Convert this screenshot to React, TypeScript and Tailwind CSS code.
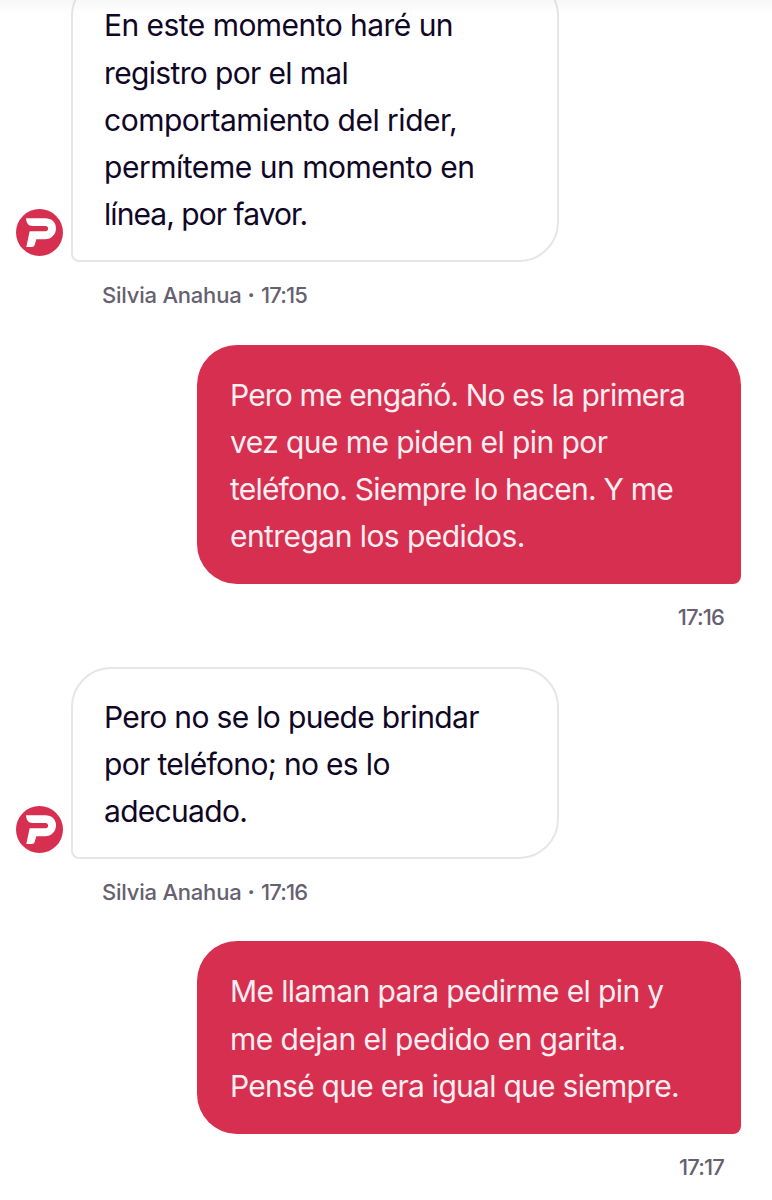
import React from "react";

type Line = { text: string; tracking: string };

type Message = {
  from: "agent" | "me";
  author?: string;
  time: string;
  lines: Line[];
};

const messages: Message[] = [
  {
    from: "agent",
    author: "Silvia Anahua",
    time: "17:15",
    lines: [
      { text: "En este momento haré un", tracking: "tracking-[-0.54px]" },
      { text: "registro por el mal", tracking: "tracking-[-0.65px]" },
      { text: "comportamiento del rider,", tracking: "tracking-[-0.5px]" },
      { text: "permíteme un momento en", tracking: "tracking-[-0.47px]" },
      { text: "línea, por favor.", tracking: "tracking-[-0.95px]" },
    ],
  },
  {
    from: "me",
    time: "17:16",
    lines: [
      { text: "Pero me engañó. No es la primera", tracking: "tracking-[-0.84px]" },
      { text: "vez que me piden el pin por", tracking: "tracking-[-0.57px]" },
      { text: "teléfono. Siempre lo hacen. Y me", tracking: "tracking-[-0.8px]" },
      { text: "entregan los pedidos.", tracking: "tracking-[-0.56px]" },
    ],
  },
  {
    from: "agent",
    author: "Silvia Anahua",
    time: "17:16",
    lines: [
      { text: "Pero no se lo puede brindar", tracking: "tracking-[-0.67px]" },
      { text: "por teléfono; no es lo", tracking: "tracking-[-0.67px]" },
      { text: "adecuado.", tracking: "tracking-[-0.7px]" },
    ],
  },
  {
    from: "me",
    time: "17:17",
    lines: [
      { text: "Me llaman para pedirme el pin y", tracking: "tracking-[-0.63px]" },
      { text: "me dejan el pedido en garita.", tracking: "tracking-[-0.54px]" },
      { text: "Pensé que era igual que siempre.", tracking: "tracking-[-0.73px]" },
    ],
  },
];

function Avatar() {
  return (
    <svg viewBox="0 0 141 141" className="mb-[6px] ml-4 h-[47px] w-[47px] shrink-0">
      <circle cx="70.5" cy="70.5" r="70.5" fill="#d72f50" />
      <path
        fill="#fff"
        d="M30 28H88C107 28 120 40 120 58C120 77 106 91 87 91H61L56 108Q54 114 48 114H31L41 67H88C99 67 99 51 88 51H50C38 51 31 44 30 28Z"
      />
    </svg>
  );
}

function Lines({ lines }: { lines: Line[] }) {
  return (
    <>
      {lines.map((line) => (
        <p key={line.text} className="whitespace-nowrap">
          <span className={line.tracking}>{line.text}</span>
        </p>
      ))}
    </>
  );
}

function AgentMessage({ message }: { message: Message }) {
  return (
    <div>
      <div className="flex items-end">
        <Avatar />
        <div className="ml-2 w-[488px] rounded-[40px] rounded-bl-[8px] border-2 border-[#e6e6e8] pr-8 pl-[31px] pt-[24.4px] pb-[21.6px] text-[30px] leading-[47.2px] text-[#100626]">
          <Lines lines={message.lines} />
        </div>
      </div>
      <div className="ml-[102px] flex h-[82.5px] pt-[17px] text-[22px] leading-8 font-medium text-[#666070]">
        <span className="tracking-[-0.22px]">{message.author}</span>
        <span className="w-[19.5px] text-center font-bold">·</span>
        <span className="tracking-[-0.85px]">{message.time}</span>
      </div>
    </div>
  );
}

function MyMessage({ message }: { message: Message }) {
  return (
    <div className="mr-[31px] flex flex-col items-end">
      <div className="w-[544px] rounded-[40px] rounded-br-[8px] bg-[#d72f50] px-[33px] pt-[27px] pb-6 text-[30px] leading-[47.2px] text-[#fdeef1]">
        <Lines lines={message.lines} />
      </div>
      <div className="mr-[17px] flex h-[83px] pt-[17px] text-[22px] leading-8 font-medium text-[#666070]">
        <span className="tracking-[-0.85px]">{message.time}</span>
      </div>
    </div>
  );
}

export default function App() {
  return (
    <main className="relative h-[1200px] w-[772px] overflow-hidden bg-white font-['Inter',sans-serif]">
      <div className="-mt-6">
        {messages.map((message, i) =>
          message.from === "agent" ? (
            <AgentMessage key={i} message={message} />
          ) : (
            <MyMessage key={i} message={message} />
          )
        )}
      </div>
      {/* header shadow */}
      <div className="absolute inset-x-0 top-0 h-3.5 bg-linear-to-b from-black/3 to-transparent" />
    </main>
  );
}
